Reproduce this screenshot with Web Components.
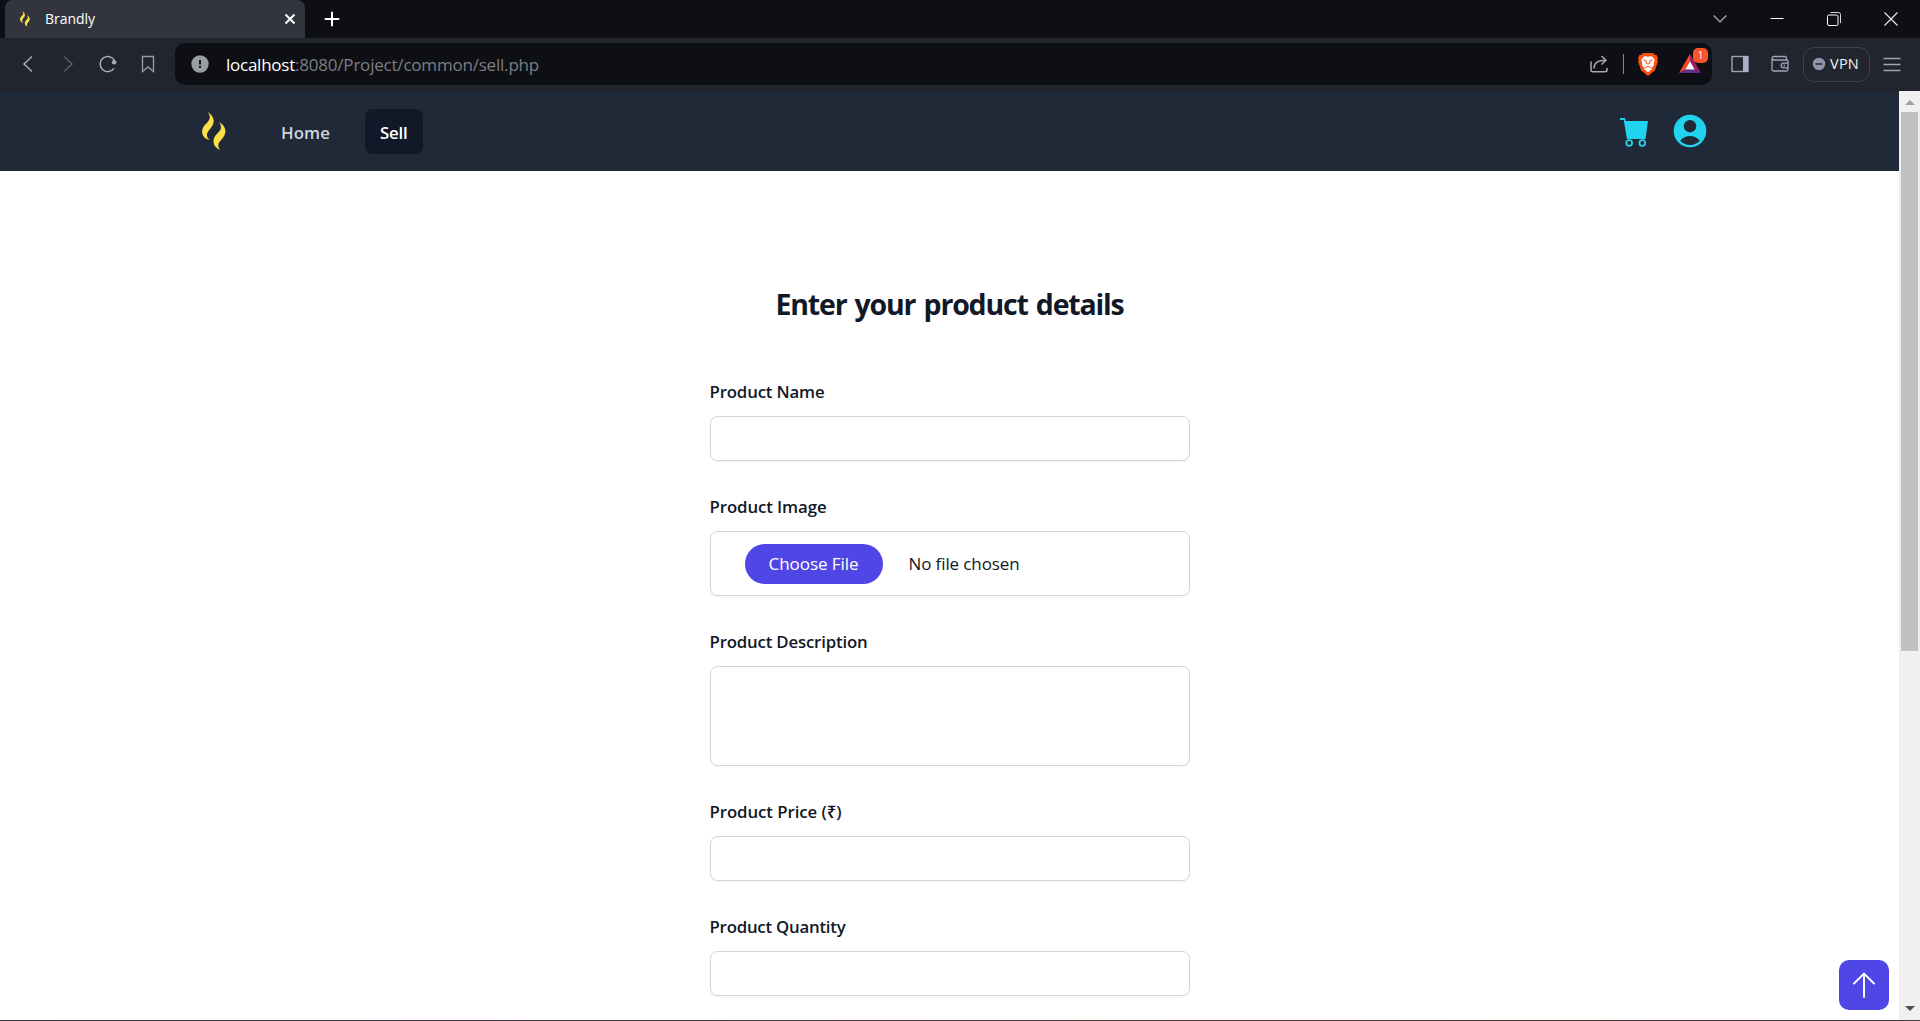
<!DOCTYPE html>
<html lang="en">
<head>
<meta charset="utf-8">
<title>Brandly</title>
<style>
html, body { margin: 0; height: 100%; overflow: hidden; }
body { font-family: "Open Sans", "Noto Sans", sans-serif; background: #fff; }
</style>
</head>
<body>
<brandly-window></brandly-window>
<script>
const define = (name, html, after) => {
  const tpl = document.createElement('template');
  tpl.innerHTML = html;
  customElements.define(name, class extends HTMLElement {
    connectedCallback() {
      if (this.shadowRoot) return;
      this.attachShadow({ mode: 'open' }).append(tpl.content.cloneNode(true));
      if (after) after(this);
    }
  });
};

/* One line of text tracked so that it fills the width given in its "w" attribute. */
define('fit-text', `<style>:host{display:block;white-space:pre;flex:none}span{display:inline-block}</style><span><slot></slot></span>`, el => {
  const w = parseFloat(el.getAttribute('w'));
  el.style.width = w + 'px';
  const s = el.shadowRoot.querySelector('span');
  const n = el.textContent.length;
  s.style.letterSpacing = ((w - s.getBoundingClientRect().width) / n) + 'px';
});

const icons = {
  flame: ['0 0 24 38', `<g fill="#fde047"><path d="M5.5 0C9.5 2.5 12.8 6.200 11.300 11.500C10 16 5.500 18.500 5 22.500C4.800 24.800 5.800 26.600 7.800 27.800C3 27.500-.3 23.500.2 18.500C.8 12.500 7.600 10.500 7.800 5.500C7.800 3.300 7 1.600 5.500 0Z"/><path d="M17 10C21 12.300 24.200 16 23.200 21C22 27 16.500 28.500 16.300 33.500C16.300 35.300 17.200 36.800 18.800 37.800C14 36.800 11 33 11.600 28C12.300 22 18.700 20.500 18.900 15.500C19 13.300 18.300 11.500 17 10Z"/></g>`],
  back: ['0 0 24 24', `<path d="M16 4.500 8 12l8 7.500" fill="none" stroke="#a3abbd" stroke-width="1.500"/>`],
  forward: ['0 0 24 24', `<path d="M8 4.500 16 12l-8 7.500" fill="none" stroke="#5b606d" stroke-width="1.500"/>`],
  reload: ['0 0 24 24', `<path d="M18 16.300A7.600 7.600 0 1 1 18.600 8.800" fill="none" stroke="#a3abbd" stroke-width="1.500"/><circle cx="18.100" cy="10.200" r="2.300" fill="#a3abbd"/>`],
  bookmark: ['0 0 24 24', `<path d="M6.500 4.500h11v15l-5.500-4.500-5.500 4.500z" fill="none" stroke="#9299aa" stroke-width="1.400"/>`],
  info: ['0 0 24 24', `<circle cx="12" cy="12" r="8.700" fill="#9a9da2"/><path d="M11 8h2v4.500h-2zM11 14h2v2h-2z" fill="#0e0f14"/>`],
  share: ['0 0 24 24', `<path d="M4 9.500v8.200a2 2 0 0 0 2 2h12a2 2 0 0 0 2-2v-1.700M7 16.500c0-6 4-8.300 11.500-8.300M14.500 4l4.500 4.200-4.500 4.300" fill="none" stroke="#a9aaae" stroke-width="1.500"/>`],
  brave: ['0 0 24 26', `<path d="M7 2h10l1.500 1.800 2-.1L22 7l-.5 2 .3 2-3 8.500L12 25l-6.800-5.500L2.200 11l.3-2L2 7l1.500-3.300 2 .1z" fill="#fb4f12"/><path d="M8.500 5 12 5.700 15.500 5l3.300 3.700-1 3.300.3 2-2.600 2.800.3 1.500L12 21.300 8.200 18.300l.3-1.500L5.900 14l.3-2-1-3.300z" fill="#fff"/><path d="m7.500 9 2.800.6-.4 2.400L12 13l2.100-1-.4-2.400L16.500 9M9 16.700l3-1.500 3 1.500" fill="none" stroke="#fb4f12" stroke-width="1"/>`],
  bat: ['0 0 24 24', `<path d="M12 2 1 21l6.500-3.600L12 9.300z" fill="#ff4724"/><path d="M12 2l11 19-6.500-3.600L12 9.300z" fill="#9e1f63"/><path d="M1 21h22l-6.500-3.800h-9z" fill="#662d91"/><path d="m12 9.300 4.700 8.200H7.300z" fill="#fff"/>`],
  sidebar: ['0 0 24 24', `<rect x="4" y="4.500" width="16" height="15" fill="none" stroke="#9ea5b8" stroke-width="1.400"/><path d="M15 4.500h5v15h-5z" fill="#a9b0c2"/>`],
  wallet: ['0 0 24 24', `<path d="M18.500 8V6A1.500 1.500 0 0 0 17 4.500H6A2 2 0 0 0 4 6.300V17a2 2 0 0 0 2 2h12.500A1.500 1.500 0 0 0 20 17.500V9.500A1.500 1.500 0 0 0 18.500 8H6A2 2 0 0 1 4 6.300M20 11.200h-4.500a2.300 2.300 0 0 0 0 4.600H20M15.500 13.500h1.500" fill="none" stroke="#9ea5b8" stroke-width="1.300"/>`],
  vpn: ['0 0 14 14', `<circle cx="7" cy="7" r="6.200" fill="#9096aa"/><path d="M3.500 7h7" stroke="#22252d" stroke-width="1.500"/>`],
  menu: ['0 0 24 24', `<path d="M3.500 6.500h17M3.500 12.500h17M3.500 18.500h17" stroke="#9ea5b8" stroke-width="1.400"/>`],
  close: ['0 0 24 24', `<path d="m7.500 7.500 9 9M16.500 7.500l-9 9" stroke="#fff" stroke-width="2"/>`],
  plus: ['0 0 24 24', `<path d="M12 4.700v14.600M4.700 12h14.600" stroke="#fff" stroke-width="2"/>`],
  down: ['0 0 24 24', `<path d="m5.700 8.500 6.300 6.500 6.300-6.500" fill="none" stroke="#b9babd" stroke-width="1.100"/>`],
  minimise: ['0 0 24 24', `<path d="M5.500 11.500h13" stroke="#fff" stroke-width="1"/>`],
  restore: ['0 0 24 24', `<path d="M8.500 5.500h8a2 2 0 0 1 2 2v8.500" fill="none" stroke="#d9d9db"/><rect x="5.500" y="8" width="10.500" height="10.500" rx="1.500" fill="none" stroke="#fff"/>`],
  quit: ['0 0 24 24', `<path d="m5.500 5.500 13 13M18.500 5.500l-13 13" stroke="#e8e8ea" stroke-width="1.200"/>`],
  cart: ['0 0 28 29', `<path d="M0 0h5l.7 3.100H28L25.500 21H7L3.700 2H0z" fill="#22d3ee"/><g fill="#1f2937" stroke="#22d3ee" stroke-width="1.800"><circle cx="9.200" cy="25" r="2.900"/><circle cx="22.300" cy="25" r="2.900"/></g>`],
  user: ['0 0 34 34', `<circle cx="17" cy="17" r="16.300" fill="#22d3ee"/><circle cx="17" cy="12.200" r="6.200" fill="#1f2937"/><path d="M7.200 26.800C9.500 23.500 13 22 17 22s7.500 1.500 9.800 4.800C24.500 29.500 20.800 31 17 31S9.500 29.500 7.200 26.800Z" fill="#1f2937"/>`],
  up: ['0 0 24 28', `<path d="M12 26V3M2 12.500 12 2.500l10 10" fill="none" stroke="#fff" stroke-width="1.900" stroke-linecap="round"/>`]
};
define('ui-icon', `<style>:host{display:block;flex:none;width:24px;height:24px}svg{display:block;width:100%;height:100%}</style>`, el => {
  const [box, art] = icons[el.getAttribute('name')];
  el.shadowRoot.innerHTML += `<svg viewBox="${box}">${art}</svg>`;
});

define('tab-strip', `<style>
:host{display:flex;height:38px;background:#0e0f14;box-sizing:border-box;padding:0 10px 0 5px;align-items:center;color:#fff}
.tab{display:flex;align-items:center;width:300px;height:38px;box-sizing:border-box;padding:0 3px 0 15px;border-radius:8px 8px 0 0;background:#32353d;font-size:14px}
.fav{width:10px;height:16px}fit-text{margin-left:15px;padding-bottom:2px}
.x{margin-left:auto}.plus{margin-left:15px}.win{margin-left:auto;display:flex;gap:33px;padding-right:7px}
</style>
<div class="tab"><ui-icon class="fav" name="flame"></ui-icon><fit-text w="50">Brandly</fit-text><ui-icon class="x" name="close"></ui-icon></div>
<ui-icon class="plus" name="plus"></ui-icon>
<div class="win"><ui-icon name="down"></ui-icon><ui-icon name="minimise"></ui-icon><ui-icon name="restore"></ui-icon><ui-icon name="quit"></ui-icon></div>`);

define('address-bar', `<style>
:host{display:flex;flex:1;height:42px;box-sizing:border-box;align-items:center;padding:0 10px 0 13px;border-radius:10px;background:#0e0f14;font-size:17px;color:#7c7e83}
.host{margin-left:14px;color:#fff}.share{margin-left:auto}
i{width:1px;height:20px;margin:0 12px 0 12px;background:#86878b}
.brave{height:26px}.bat{position:relative;margin-left:18px}
b{position:absolute;left:15px;top:-4px;width:15px;height:15px;border-radius:5px;background:#fb542b;color:#fff;font:10px/15px "Open Sans",sans-serif;text-align:center}
</style>
<ui-icon name="info"></ui-icon><fit-text class="host" w="69">localhost</fit-text><fit-text w="244">:8080/Project/common/sell.php</fit-text>
<ui-icon class="share" name="share"></ui-icon><i></i><ui-icon class="brave" name="brave"></ui-icon>
<div class="bat"><ui-icon name="bat"></ui-icon><b>1</b></div>`);

define('tool-bar', `<style>
:host{display:flex;height:53px;box-sizing:border-box;align-items:center;padding:0 16px 1px 16px;background:#22252d}
.nav,.ext{display:flex;gap:16px}.nav{margin-right:15px}.ext{margin-left:16px}
.vpn{display:flex;align-items:center;box-sizing:border-box;width:67px;height:35px;margin:0 10px 0 11px;padding-left:8px;border:1px solid #3d414b;border-radius:11px;color:#f2f3f5;font-size:14.500px}
.vpn ui-icon{width:14px;height:14px;margin-right:4px}.vpn fit-text{padding-bottom:2px}
</style>
<div class="nav"><ui-icon name="back"></ui-icon><ui-icon name="forward"></ui-icon><ui-icon name="reload"></ui-icon><ui-icon name="bookmark"></ui-icon></div>
<address-bar></address-bar>
<div class="ext"><ui-icon name="sidebar"></ui-icon><ui-icon name="wallet"></ui-icon></div>
<div class="vpn"><ui-icon name="vpn"></ui-icon><fit-text w="29">VPN</fit-text></div>
<ui-icon name="menu"></ui-icon>`);

define('site-nav', `<style>
:host{display:flex;flex:none;height:80px;box-sizing:border-box;align-items:center;padding:0 192px 0 202px;background:#1f2937;font-size:16.800px;font-weight:600;color:#d1d5db}
fit-text{padding-top:2px}
.logo{width:24px;height:38px}.home{margin-left:55px}
.sell{display:flex;align-items:center;margin-left:35px;width:58px;height:45px;box-sizing:border-box;padding-left:15px;border-radius:7.500px;background:#111827;color:#fff}
.cart{width:28px;height:29px;margin-left:auto;padding-top:2px}.user{width:34px;height:34px;margin-left:25px}
</style>
<ui-icon class="logo" name="flame"></ui-icon><fit-text class="home" w="49">Home</fit-text><div class="sell"><fit-text w="27.500">Sell</fit-text></div>
<ui-icon class="cart" name="cart"></ui-icon><ui-icon class="user" name="user"></ui-icon>`);

define('form-field', `<style>
:host{display:flex;flex-direction:column;gap:10px;font-size:16.800px;font-weight:600;color:#111827}
.label{height:30px;line-height:32px}
.box{display:flex;align-items:center;height:var(--h,45px);box-sizing:border-box;border:1px solid #d1d5db;border-radius:7.500px;box-shadow:0 1px 2px rgba(0,0,0,.05);background:#fff;font-weight:400}
</style><div class="label"><slot name="label"></slot></div><div class="box"><slot></slot></div>`);

define('file-picker', `<style>
:host{display:flex;align-items:center;padding-left:34px;font-size:17px;line-height:24px;font-weight:400;color:#111827}
fit-text{padding-top:1px}
.btn{display:flex;align-items:center;justify-content:center;width:138px;height:40px;margin-right:26px;border-radius:20px;background:#4f46e5;color:#fff}
</style><div class="btn"><fit-text w="90">Choose File</fit-text></div><fit-text w="111">No file chosen</fit-text>`);

define('sell-form', `<style>
:host{display:flex;flex-direction:column;align-items:center;padding-top:109px}
h2{margin:0 0 48px;font-size:28.500px;line-height:48px;font-weight:700;color:#111827;word-spacing:2px}
form{display:flex;flex-direction:column;gap:30px;width:480px}
.file{--h:65px}.desc{--h:100px}
</style>
<h2><fit-text w="348">Enter your product details</fit-text></h2>
<form>
<form-field><fit-text slot="label" w="115">Product Name</fit-text></form-field>
<form-field class="file"><fit-text slot="label" w="117">Product Image</fit-text><file-picker></file-picker></form-field>
<form-field class="desc"><fit-text slot="label" w="158">Product Description</fit-text></form-field>
<form-field><fit-text slot="label" w="132">Product Price (₹)</fit-text></form-field>
<form-field><fit-text slot="label" w="136">Product Quantity</fit-text></form-field>
</form>`);

define('scroll-bar', `<style>
:host{display:flex;flex-direction:column;align-items:center;width:21px;background:#f0f0f0}
i{width:0;height:0;border:5px solid transparent}
.up{margin-top:4px;border-bottom-color:#a0a0a0}.thumb{width:17px;height:539px;margin-top:7px;background:#c1c1c1}
.dn{margin-top:auto;margin-bottom:4px;border-top-color:#505050}
</style><i class="up"></i><div class="thumb"></div><i class="dn"></i>`);

define('scroll-top', `<style>
:host{position:absolute;right:10px;bottom:10px;display:flex;align-items:center;justify-content:center;width:50px;height:50px;border-radius:10px;background:#4f46e5}
ui-icon{height:28px}</style><ui-icon name="up"></ui-icon>`);

define('brandly-window', `<style>
:host{display:flex;flex-direction:column;height:1021px;box-sizing:border-box;overflow:hidden}
.view{display:flex;flex:1;min-height:0}
.page{position:relative;flex:1;display:flex;flex-direction:column;background:#fff;overflow:hidden}
.edge{height:1px;flex:none;background:linear-gradient(90deg,#3b3c46,#4c3f46 40%,#5a3c3c 65%,#453a3c)}
</style>
<tab-strip></tab-strip><tool-bar></tool-bar>
<div class="view"><div class="page"><site-nav></site-nav><sell-form></sell-form><scroll-top></scroll-top></div><scroll-bar></scroll-bar></div><div class="edge"></div>`);
</script>
</body>
</html>
